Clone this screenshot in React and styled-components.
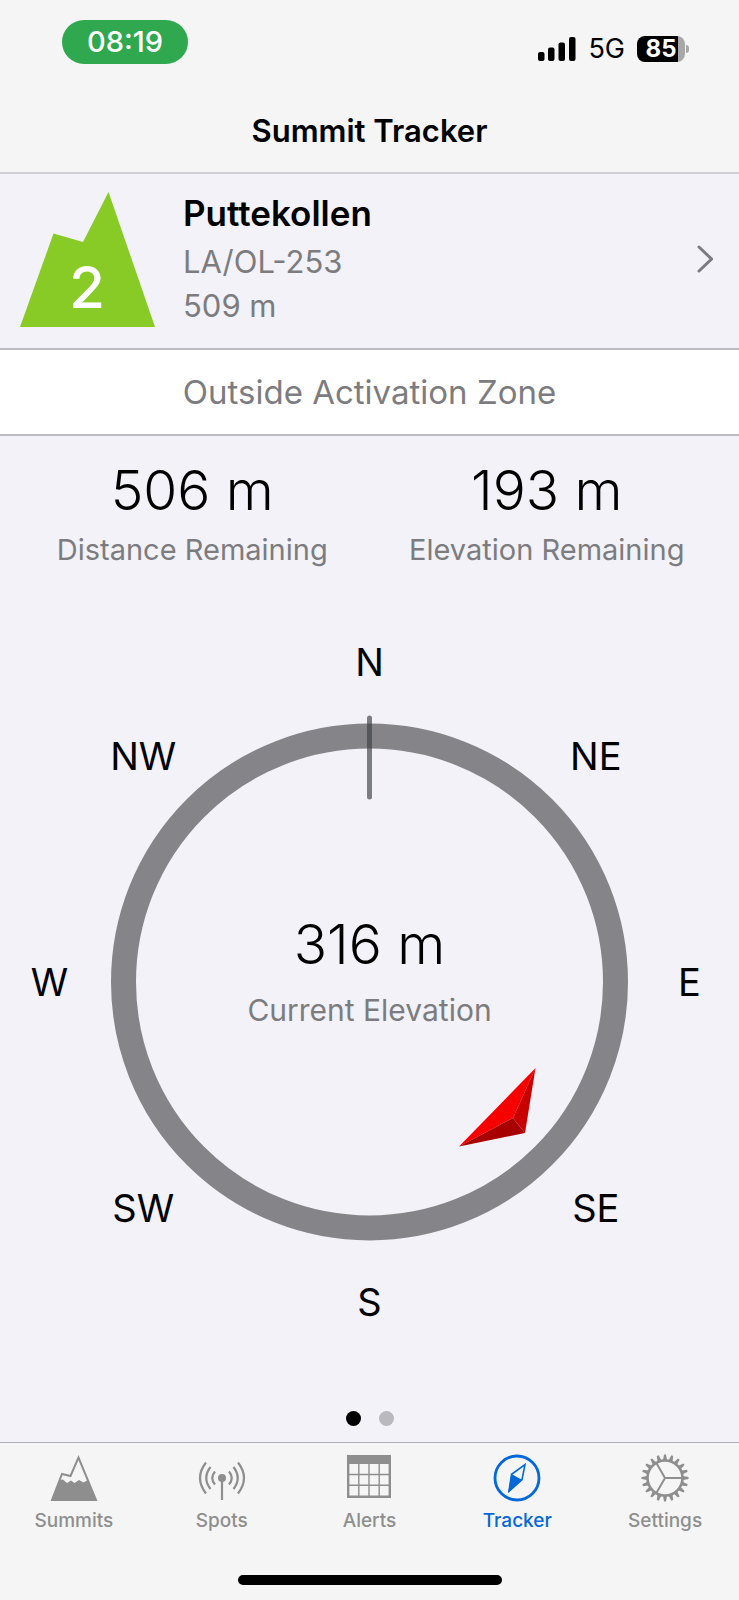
import React, { useState } from 'react';
import styled, { createGlobalStyle } from 'styled-components';

const GlobalStyle = createGlobalStyle`
  * {
    box-sizing: border-box;
  }
  body {
    margin: 0;
    background: #f2f2f8;
    color: #000;
    font-family: Inter, 'Liberation Sans', sans-serif;
  }
  h1, h2, p {
    margin: 0;
  }
  button {
    border: none;
    background: none;
    font-family: inherit;
    cursor: pointer;
  }
`;

const Screen = styled.div`
  display: flex;
  flex-direction: column;
  min-height: 100vh;
`;

const Header = styled.header`
  background: #f5f5f5;
  border-bottom: 2px solid #d0d0d4;
`;

const StatusBar = styled.div`
  display: flex;
  justify-content: space-between;
  align-items: flex-start;
  padding: 20px 50px 0 62px;
`;

const TimePill = styled.div`
  width: 126px;
  border-radius: 22px;
  background: #2fa84f;
  color: #fff;
  font-size: 29px;
  font-weight: 500;
  line-height: 44px;
  text-align: center;
`;

const StatusIcons = styled.div`
  display: flex;
  align-items: center;
  gap: 12px;
  padding-top: 12px;
`;

const Network = styled.span`
  font-size: 27px;
  line-height: 34px;
`;

const Battery = styled.div`
  display: flex;
  align-items: center;
  gap: 1px;

  &::after {
    content: '';
    width: 3px;
    height: 8px;
    border-radius: 0 4px 4px 0;
    background: #a8a8a8;
  }
`;

const BatteryLevel = styled.div`
  width: 48px;
  border-radius: 8px;
  background: linear-gradient(to right, #000 85%, #a8a8a8 85%);
  color: #fff;
  font-size: 24px;
  font-weight: 700;
  line-height: 26px;
  text-align: center;
`;

const Title = styled.h1`
  padding: 53px 0 29px;
  font-size: 31px;
  font-weight: 600;
  line-height: 24px;
  text-align: center;
`;

const SummitRow = styled.button`
  display: flex;
  align-items: center;
  gap: 28px;
  width: 100%;
  padding: 16px 26px 20px 20px;
  border-bottom: 2px solid #bcbcc2;
  color: inherit;
  text-align: left;
`;

const SummitInfo = styled.span`
  display: flex;
  flex: 1;
  flex-direction: column;
`;

const SummitName = styled.span`
  margin-bottom: 4px;
  font-size: 35px;
  font-weight: 600;
  line-height: 46px;
`;

const SummitDetail = styled.span`
  color: #7c7c80;
  font-size: 31px;
  line-height: 44px;
`;

const ZoneBanner = styled.p`
  border-bottom: 2px solid #bcbcc2;
  background: #fff;
  color: #7c7c80;
  font-size: 33px;
  line-height: 84px;
  text-align: center;
`;

const Stats = styled.div`
  display: grid;
  grid-template-columns: 1fr 1fr;
  padding: 21px 15px 4px;
`;

const Stat = styled.div`
  display: flex;
  flex-direction: column;
  align-items: center;
`;

const Readout = styled(Stat)`
  gap: 6px;
  padding-bottom: 16px;
`;

const StatValue = styled.span`
  font-size: 55px;
  font-weight: 300;
  line-height: 66px;
`;

const StatLabel = styled.span`
  color: #7c7c80;
  font-size: ${(props) => (props.$large ? '30px' : '29px')};
  line-height: 54px;
`;

const CompassArea = styled.main`
  display: grid;
  flex: 1;
  align-items: center;
  justify-items: center;

  > * {
    grid-area: 1 / 1;
  }
`;

const Dial = styled.svg`
  width: 100%;
  max-width: 900px;
  font-size: 38px;
`;

const PageDots = styled.div`
  display: flex;
  justify-content: center;
  gap: 18px;
  padding: 29px 0 16px;
`;

const Dot = styled.button`
  width: 15px;
  height: 15px;
  padding: 0;
  border-radius: 50%;
  background: ${(props) => (props.$active ? '#000' : '#b9b9be')};
`;

const Footer = styled.footer`
  border-top: 1px solid #b0b0b8;
  background: #f5f5f5;
`;

const TabBar = styled.nav`
  display: grid;
  grid-template-columns: repeat(5, 1fr);
`;

const Tab = styled.button`
  display: flex;
  flex-direction: column;
  align-items: center;
  gap: 5px;
  padding: 11px 0 0;
  color: ${(props) => (props.$active ? '#0468d8' : '#8e8e8e')};
  font-size: 19px;
  font-weight: 500;
  line-height: 28px;
`;

const HomeIndicator = styled.div`
  width: 264px;
  height: 10px;
  margin: 40px auto 15px;
  border-radius: 5px;
  background: #000;
`;

const SignalIcon = () => (
  <svg width="38" height="24" viewBox="0 0 38 24" aria-hidden="true">
    <rect x="0" y="15" width="6.5" height="9" rx="2" />
    <rect x="10" y="10.5" width="6.5" height="13.5" rx="2" />
    <rect x="20.5" y="5.5" width="6.5" height="18.5" rx="2" />
    <rect x="31" y="0" width="6.5" height="24" rx="2" />
  </svg>
);

const SummitBadge = ({ points }) => (
  <svg width="135" height="138" viewBox="0 0 135 138" aria-hidden="true">
    <path d="M0 137 L33.5 43.5 L63 52 L88.5 2 L135 137 Z" fill="#88cb26" />
    <text x="67" y="118" fill="#fff" fontSize="58" fontWeight="500" textAnchor="middle">
      {points}
    </text>
  </svg>
);

const ChevronIcon = () => (
  <svg width="16" height="28" viewBox="0 0 16 28" aria-hidden="true">
    <path
      d="M2 2 L14.5 14 L2 26"
      fill="none"
      stroke="#7c7c80"
      strokeWidth="3"
      strokeLinecap="round"
    />
  </svg>
);

const SummitsIcon = () => (
  <svg width="48" height="48" viewBox="0 0 48 48" aria-hidden="true">
    <path
      d="M2 46 L12 20 L20.5 22 L28.5 3.5 L46 46 Z"
      fill="none"
      stroke="currentColor"
      strokeWidth="2"
    />
    <path
      d="M1 47 L9.5 26 L13 25.5 L17 29 L21 26.5 L24.5 29 L29 26 L33.5 28.5 L38 26 L47 47 Z"
      fill="currentColor"
    />
  </svg>
);

const SpotsIcon = () => (
  <svg width="48" height="48" viewBox="0 0 48 48" aria-hidden="true">
    <circle cx="24" cy="24" r="4" fill="currentColor" />
    <g fill="none" stroke="currentColor" strokeWidth="2.2">
      <path d="M24 24 V46" />
      <path d="M17 17.5 Q11.5 24 17 30.5 M31 17.5 Q36.5 24 31 30.5" />
      <path d="M12.5 13 Q4 24 12.5 35 M35.5 13 Q44 24 35.5 35" />
      <path d="M8 8.5 Q-4 24 8 39.5 M40 8.5 Q52 24 40 39.5" />
    </g>
  </svg>
);

const AlertsIcon = () => (
  <svg width="48" height="48" viewBox="0 0 48 48" aria-hidden="true">
    <path d="M2 1 H46 V10 H2 Z" fill="currentColor" />
    <path
      d="M13.8 10 V43 M24 10 V43 M34.2 10 V43 M3 20.5 H45 M3 31.2 H45"
      fill="none"
      stroke="currentColor"
      strokeWidth="1.4"
    />
    <path d="M3.2 9 V42.8 H44.8 V9" fill="none" stroke="currentColor" strokeWidth="2.4" />
  </svg>
);

const TrackerIcon = () => (
  <svg width="48" height="48" viewBox="0 0 48 48" aria-hidden="true">
    <circle cx="24" cy="24" r="22" fill="none" stroke="currentColor" strokeWidth="2.8" />
    <path
      d="M32 10.5 L29 25.7 L16 37 L18.6 20.3 Z"
      fill="none"
      stroke="currentColor"
      strokeWidth="1.6"
    />
    <path d="M18.3 20 L29.5 26 L15.2 39 Z" fill="currentColor" />
  </svg>
);

const SettingsIcon = () => (
  <svg width="48" height="48" viewBox="0 0 48 48" aria-hidden="true">
    <g fill="none" stroke="currentColor">
      <circle cx="24" cy="24" r="17.5" strokeWidth="2.6" />
      <path d="M24 24 H41 M24 24 L15.5 9.3 M24 24 L15.5 38.7" strokeWidth="2" />
    </g>
    {Array.from({ length: 20 }, (_, i) => (
      <path
        key={i}
        d="M42 22 L47.5 23 V25 L42 26 Z"
        fill="currentColor"
        transform={`rotate(${i * 18} 24 24)`}
      />
    ))}
  </svg>
);

const points = ['N', 'NE', 'E', 'SE', 'S', 'SW', 'W', 'NW'];

const Compass = () => (
  <Dial viewBox="0 0 739 700" role="img" aria-label="Compass">
    <circle cx="369.5" cy="350" r="246" fill="none" stroke="#858489" strokeWidth="25" />
    <path
      d="M369.5 86 V165"
      stroke="#3c3c43"
      strokeOpacity="0.65"
      strokeWidth="5"
      strokeLinecap="round"
    />
    {points.map((point, i) => {
      const angle = (i * Math.PI) / 4;
      return (
        <text
          key={point}
          x={369.5 + 320 * Math.sin(angle)}
          y={364 - 320 * Math.cos(angle)}
          textAnchor="middle"
        >
          {point}
        </text>
      );
    })}
    {/* pointer towards the summit */}
    <path d="M535.5 436 L459 514.5 L513 486 Z" fill="#f80000" />
    <path d="M535.5 436 L525 501 L513 486 Z" fill="#c80000" />
    <path d="M459 514.5 L525 501 L513 486 Z" fill="#a80000" />
  </Dial>
);

const tabs = [
  { name: 'Summits', Icon: SummitsIcon },
  { name: 'Spots', Icon: SpotsIcon },
  { name: 'Alerts', Icon: AlertsIcon },
  { name: 'Tracker', Icon: TrackerIcon },
  { name: 'Settings', Icon: SettingsIcon },
];

const App = () => {
  const [activeTab, setActiveTab] = useState('Tracker');
  const [page, setPage] = useState(0);

  return (
    <Screen>
      <GlobalStyle />
      <Header>
        <StatusBar>
          <TimePill>08:19</TimePill>
          <StatusIcons>
            <SignalIcon />
            <Network>5G</Network>
            <Battery>
              <BatteryLevel>85</BatteryLevel>
            </Battery>
          </StatusIcons>
        </StatusBar>
        <Title>Summit Tracker</Title>
      </Header>

      <SummitRow type="button">
        <SummitBadge points={2} />
        <SummitInfo>
          <SummitName>Puttekollen</SummitName>
          <SummitDetail>LA/OL-253</SummitDetail>
          <SummitDetail>509 m</SummitDetail>
        </SummitInfo>
        <ChevronIcon />
      </SummitRow>
      <ZoneBanner>Outside Activation Zone</ZoneBanner>

      <Stats>
        <Stat>
          <StatValue>506 m</StatValue>
          <StatLabel>Distance Remaining</StatLabel>
        </Stat>
        <Stat>
          <StatValue>193 m</StatValue>
          <StatLabel>Elevation Remaining</StatLabel>
        </Stat>
      </Stats>

      <CompassArea>
        <Compass />
        <Readout>
          <StatValue>316 m</StatValue>
          <StatLabel $large>Current Elevation</StatLabel>
        </Readout>
      </CompassArea>

      <PageDots>
        {[0, 1].map((index) => (
          <Dot
            key={index}
            type="button"
            aria-label={`Page ${index + 1}`}
            $active={index === page}
            onClick={() => setPage(index)}
          />
        ))}
      </PageDots>

      <Footer>
        <TabBar>
          {tabs.map(({ name, Icon }) => (
            <Tab
              key={name}
              type="button"
              $active={name === activeTab}
              onClick={() => setActiveTab(name)}
            >
              <Icon />
              {name}
            </Tab>
          ))}
        </TabBar>
        <HomeIndicator />
      </Footer>
    </Screen>
  );
};

export default App;
